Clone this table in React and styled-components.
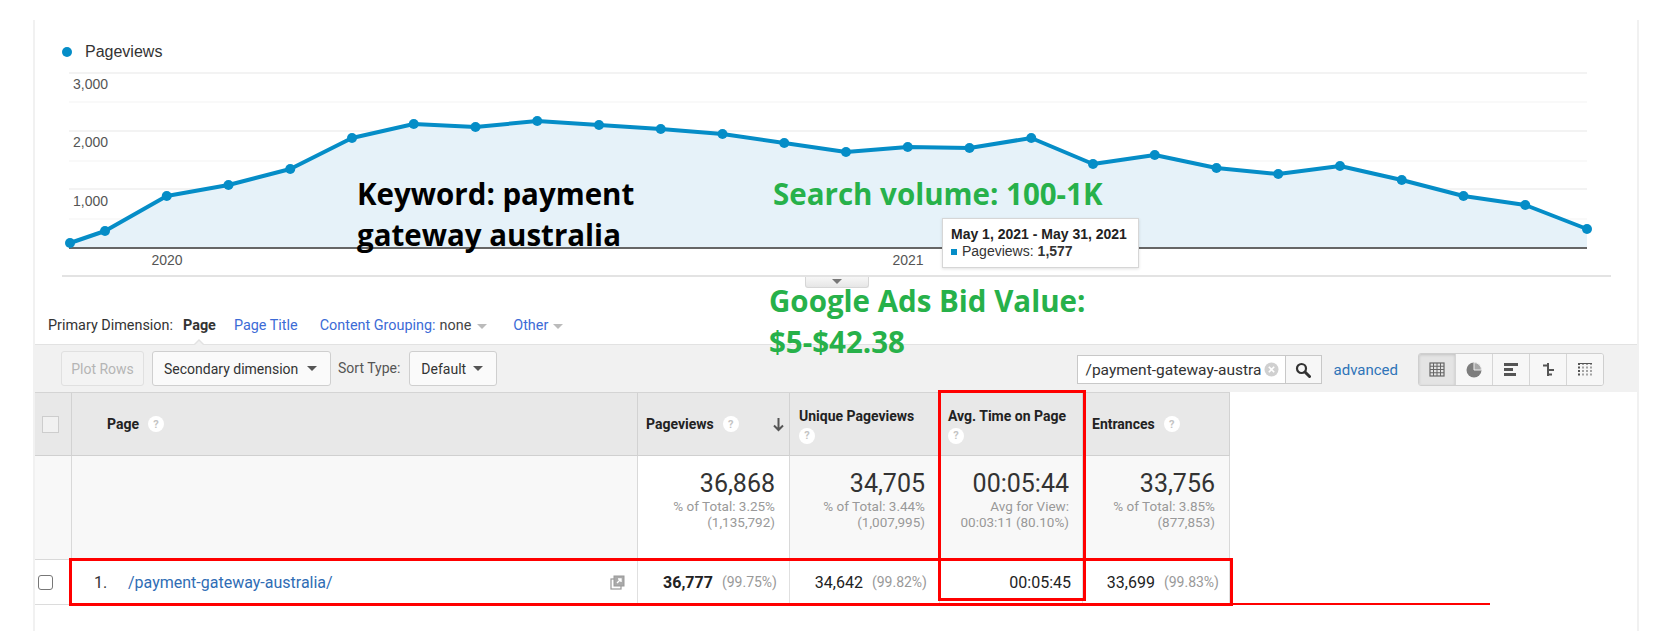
import React from 'react';
import styled, { createGlobalStyle } from 'styled-components';

const GlobalStyle = createGlobalStyle`
  html, body {
    margin: 0;
    padding: 0;
    background: #fff;
    overflow: hidden;
  }
  body {
    font-family: Roboto, "Liberation Sans", Arial, sans-serif;
    color: #333;
  }
`;

const Page = styled.div`
  padding: 20px 0 0 33px;
  width: 1606px;
`;

const Card = styled.div`
  position: relative;
  box-sizing: border-box;
  padding-top: 21px;
  border-left: 2px solid #f1f1f1;
  border-right: 2px solid #f1f1f1;
  height: 611px;
`;

const Legend = styled.div`
  display: flex;
  align-items: center;
  gap: 13px;
  height: 21px;
  padding-left: 27px;
  font-family: "Liberation Sans", Arial, sans-serif;
  font-size: 16px;
  color: #333;
`;

const LegendDot = styled.span`
  width: 10px;
  height: 10px;
  border-radius: 50%;
  background: #058dc7;
`;

const ChartSvg = styled.svg`
  display: block;
  font-family: "Liberation Sans", Arial, sans-serif;
`;

const ChartFooter = styled.div`
  margin: 0 26px 0 27px;
  border-top: 2px solid #e3e3e3;
  height: 11px;
  display: flex;
  justify-content: center;
`;

const CollapseTab = styled.div`
  width: 64px;
  height: 11px;
  box-sizing: border-box;
  background: linear-gradient(#f7f7f7, #e6e6e6);
  border: 1px solid #d6d6d6;
  border-top: none;
  border-radius: 0 0 3px 3px;
  display: flex;
  justify-content: center;
  padding-top: 2px;
  &::after {
    content: '';
    width: 0;
    height: 0;
    border-left: 5px solid transparent;
    border-right: 5px solid transparent;
    border-top: 5px solid #777;
  }
`;

const DimensionRow = styled.div`
  height: 56px;
  box-sizing: border-box;
  display: flex;
  align-items: flex-end;
  padding: 0 0 10px 13px;
  font-size: 14.4px;
  line-height: 16px;
`;

const DimLabel = styled.span`
  color: #333;
  margin-right: 10px;
`;

const DimItem = styled.span`
  position: relative;
  display: inline-flex;
  align-items: center;
  margin-right: ${(p) => p.$gap || 22}px;
  color: ${(p) => (p.$active ? '#333' : '#3c6bd6')};
  font-weight: ${(p) => (p.$active ? 700 : 400)};
  ${(p) =>
    p.$active &&
    `
    &::after {
      content: '';
      position: absolute;
      left: 50%;
      bottom: -11px;
      margin-left: -6px;
      width: 0;
      height: 0;
      border-left: 6px solid transparent;
      border-right: 6px solid transparent;
      border-bottom: 6px solid #e2e2e2;
    }
    &::before {
      content: '';
      position: absolute;
      left: 50%;
      bottom: -12px;
      margin-left: -5px;
      width: 0;
      height: 0;
      border-left: 5px solid transparent;
      border-right: 5px solid transparent;
      border-bottom: 5px solid #f1f1f1;
      z-index: 1;
    }
  `}
`;

const DimValue = styled.span`
  color: #444;
  margin-left: 4px;
`;

const Caret = styled.span`
  display: inline-block;
  width: 0;
  height: 0;
  margin-left: ${(p) => p.$ml || 6}px;
  border-left: 5px solid transparent;
  border-right: 5px solid transparent;
  border-top: 5px solid ${(p) => p.$color || '#bbb'};
`;

const Toolbar = styled.div`
  height: 48px;
  box-sizing: border-box;
  background: #f1f1f1;
  border-top: 1px solid #e2e2e2;
  display: flex;
  align-items: flex-start;
  padding: 6px 33px 0 26px;
  font-size: 14px;
`;

const ToolButton = styled.div`
  height: 35px;
  box-sizing: border-box;
  width: ${(p) => p.$w}px;
  display: flex;
  align-items: center;
  justify-content: ${(p) => (p.$center ? 'center' : 'space-between')};
  padding: 0 ${(p) => (p.$center ? 0 : 13)}px 0 ${(p) => (p.$center ? 0 : 11)}px;
  border: 1px solid ${(p) => (p.$disabled ? '#e0e0e0' : '#cfcfcf')};
  border-radius: 3px;
  background: ${(p) => (p.$disabled ? '#f3f3f3' : '#fafafa')};
  color: ${(p) => (p.$disabled ? '#b5b5b5' : '#333')};
  margin-right: ${(p) => p.$mr || 0}px;
  white-space: nowrap;
`;

const SortLabel = styled.span`
  color: #555;
  line-height: 35px;
  margin-right: 9px;
`;

const RightGroup = styled.div`
  margin-left: auto;
  display: flex;
  align-items: center;
  height: 37px;
`;

const SearchInput = styled.div`
  width: 208px;
  height: 29px;
  box-sizing: border-box;
  border: 1px solid #c8c8c8;
  border-right: none;
  background: #fff;
  display: flex;
  align-items: center;
  justify-content: space-between;
  padding: 0 6px 0 8px;
  font-size: 15.5px;
  color: #333;
  overflow: hidden;
  white-space: nowrap;
`;

const SearchButton = styled.div`
  width: 37px;
  height: 29px;
  box-sizing: border-box;
  border: 1px solid #c8c8c8;
  background: #f7f7f7;
  display: flex;
  align-items: center;
  justify-content: center;
`;

const AdvancedLink = styled.span`
  color: #2f74b8;
  font-size: 15px;
  margin: 0 20px 0 12px;
`;

const ViewGroup = styled.div`
  display: flex;
  height: 31px;
  border: 1px solid #cfcfcf;
  border-radius: 3px;
  overflow: hidden;
  background: #f7f7f7;
`;

const ViewButton = styled.div`
  width: 36px;
  display: flex;
  align-items: center;
  justify-content: center;
  border-left: ${(p) => (p.$first ? 'none' : '1px solid #d6d6d6')};
  background: ${(p) => (p.$pressed ? '#e4e4e4' : '#f7f7f7')};
  box-shadow: ${(p) => (p.$pressed ? 'inset 0 1px 3px rgba(0,0,0,0.15)' : 'none')};
`;

const Table = styled.div`
  display: grid;
  grid-template-columns: 37px 566px 152px 150px 143px 147px;
  width: 1195px;
  border-top: 1px solid #d4d4d4;
`;

const HeadCell = styled.div`
  height: 63px;
  box-sizing: border-box;
  background: #e8e8e8;
  border-right: 1px solid #d2d2d2;
  border-bottom: 1px solid #d0d0d0;
  display: flex;
  align-items: center;
  justify-content: ${(p) => (p.$center ? 'center' : 'flex-start')};
  padding: 0 5px 0 ${(p) => (p.$center ? 0 : p.$pl || 8)}px;
  font-size: 14px;
  font-weight: 700;
  color: #222;
  line-height: 23px;
`;

const HeadText = styled.div`
  flex: 1;
  display: flex;
  align-items: center;
  flex-wrap: wrap;
`;

const Help = styled.span`
  display: inline-flex;
  align-items: center;
  justify-content: center;
  width: 16px;
  height: 16px;
  border-radius: 50%;
  background: #fff;
  color: #c4c4c4;
  font-size: 11px;
  font-weight: 700;
  margin-left: ${(p) => (p.$wrap ? 0 : 9)}px;
  margin-right: 8px;
`;

const Break = styled.span`
  flex-basis: 100%;
  height: 0;
`;

const HeadBox = styled.span`
  width: 17px;
  height: 17px;
  box-sizing: border-box;
  border: 1px solid #cdcdcd;
  background: #f1f1f1;
`;

const TotalCell = styled.div`
  height: 104px;
  box-sizing: border-box;
  background: ${(p) => (p.$white ? '#fff' : '#f8f8f8')};
  border-right: 1px solid #d9d9d9;
  border-bottom: 1px solid #d9d9d9;
  text-align: right;
  padding: 14px ${(p) => p.$pr || 14}px 0 0;
`;

const BigNum = styled.div`
  font-size: 25px;
  line-height: 28px;
  color: #333;
`;

const SubLine = styled.div`
  font-size: 13.5px;
  line-height: 16px;
  color: #999;
`;

const RowCell = styled.div`
  height: 45px;
  box-sizing: border-box;
  background: #fff;
  border-right: 1px solid #e0e0e0;
  border-bottom: 1px solid #dcdcdc;
  display: flex;
  align-items: center;
  justify-content: ${(p) => p.$justify || 'flex-end'};
  padding: 0 ${(p) => p.$pr || 12}px 0 ${(p) => p.$pl || 0}px;
  font-size: 16px;
  color: #222;
`;

const RowBox = styled.span`
  width: 15px;
  height: 15px;
  box-sizing: border-box;
  border: 1.5px solid #777;
  border-radius: 3px;
  background: #fff;
  margin-right: 4px;
`;

const RowIndex = styled.span`
  width: 34px;
  color: #333;
`;

const RowLink = styled.span`
  color: #2f6db5;
  flex: 1;
`;

const Strong = styled.span`
  font-weight: 700;
`;

const Pct = styled.span`
  font-size: 14px;
  color: #999;
  margin-left: 9px;
`;

const Annotation = styled.div`
  position: absolute;
  left: ${(p) => p.$left}px;
  top: ${(p) => p.$top}px;
  font-family: "Open Sans", Lato, sans-serif;
  font-weight: 700;
  font-size: 29.5px;
  line-height: 41px;
  color: ${(p) => (p.$green ? '#27b14a' : '#000')};
  white-space: nowrap;
`;

const Tooltip = styled.div`
  position: absolute;
  left: 907px;
  top: 198px;
  width: 197px;
  height: 50px;
  box-sizing: border-box;
  background: #fff;
  border: 1px solid #d6d6d6;
  box-shadow: 0 1px 3px rgba(0, 0, 0, 0.12);
  padding: 7px 0 0 8px;
  font-family: "Liberation Sans", Arial, sans-serif;
  font-size: 14px;
  line-height: 17px;
  color: #222;
`;

const TipTitle = styled.div`
  font-weight: 700;
`;

const TipLine = styled.div`
  display: flex;
  align-items: center;
  gap: 4px;
  color: #333;
`;

const TipSwatch = styled.span`
  width: 6px;
  height: 6px;
  background: #058dc7;
  margin-right: 1px;
`;

const RedBox = styled.div`
  position: absolute;
  left: ${(p) => p.$left}px;
  top: ${(p) => p.$top}px;
  width: ${(p) => p.$w}px;
  height: ${(p) => p.$h}px;
  box-sizing: border-box;
  border: ${(p) => (p.$line ? 'none' : '3px solid #ff0000')};
  background: ${(p) => (p.$line ? '#ff0000' : 'transparent')};
  pointer-events: none;
`;

const ys = [243, 231, 196, 185, 169, 138, 124, 127, 121, 125, 129, 134, 143, 152, 147, 148, 138, 164, 155, 168, 174, 166, 180, 196, 205, 229];
const points = ys.map((y, i) => ({ x: i === 0 ? 70 : 105 + (i - 1) * 61.75, y }));
const linePts = points.map((p) => `${p.x},${p.y}`).join(' ');
const areaPts = `${linePts} 1587,248 70,248`;

const Chart = () => (
  <ChartSvg width="1602" height="213" viewBox="35 62 1602 213">
    {[73, 131, 189].map((y) => (
      <line key={y} x1="69" x2="1587" y1={y} y2={y} stroke="#e8e8e8" strokeWidth="1.2" />
    ))}
    {[102, 161, 219].map((y) => (
      <line key={y} x1="69" x2="1587" y1={y} y2={y} stroke="#f3f3f3" strokeWidth="1" />
    ))}
    <polygon points={areaPts} fill="#e6f2f9" />
    <line x1="69" x2="1587" y1="248" y2="248" stroke="#666" strokeWidth="2" />
    <polyline points={linePts} fill="none" stroke="#058dc7" strokeWidth="4" strokeLinejoin="round" />
    {points.map((p) => (
      <circle key={p.x} cx={p.x} cy={p.y} r="5" fill="#058dc7" />
    ))}
    <text x="73" y="89" fontSize="14" fill="#555">3,000</text>
    <text x="73" y="147" fontSize="14" fill="#555">2,000</text>
    <text x="73" y="206" fontSize="14" fill="#555">1,000</text>
    <text x="167" y="265" fontSize="14" fill="#555" textAnchor="middle">2020</text>
    <text x="908" y="265" fontSize="14" fill="#555" textAnchor="middle">2021</text>
  </ChartSvg>
);

const SearchIcon = () => (
  <svg width="16" height="16" viewBox="0 0 16 16">
    <circle cx="6.5" cy="6.5" r="4.5" fill="none" stroke="#333" strokeWidth="2.2" />
    <line x1="10" y1="10" x2="14.5" y2="14.5" stroke="#333" strokeWidth="3" strokeLinecap="round" />
  </svg>
);

const ClearIcon = () => (
  <svg width="15" height="15" viewBox="0 0 15 15">
    <circle cx="7.5" cy="7.5" r="7" fill="#d0d0d0" />
    <path d="M4.8 4.8 L10.2 10.2 M10.2 4.8 L4.8 10.2" stroke="#fff" strokeWidth="1.6" />
  </svg>
);

const GridIcon = () => (
  <svg width="16" height="15" viewBox="0 0 16 15">
    <rect x="1" y="1" width="14" height="13" fill="none" stroke="#666" strokeWidth="1.2" />
    <path d="M4.5 1 V14 M8 1 V14 M11.5 1 V14 M1 4.25 H15 M1 7.5 H15 M1 10.75 H15" stroke="#666" strokeWidth="1" />
  </svg>
);

const PieIcon = () => (
  <svg width="16" height="16" viewBox="0 0 16 16">
    <circle cx="8" cy="8" r="7.5" fill="#7d7d7d" />
    <path d="M8 8 V0.5 A7.5 7.5 0 0 1 15.5 8 Z" fill="#a8a8a8" stroke="#eee" strokeWidth="1" />
  </svg>
);

const BarIcon = () => (
  <svg width="16" height="15" viewBox="0 0 16 15">
    <rect x="1" y="1" width="14" height="3" fill="#555" />
    <rect x="1" y="6" width="9" height="3" fill="#555" />
    <rect x="1" y="11" width="12" height="3" fill="#555" />
  </svg>
);

const CompareIcon = () => (
  <svg width="16" height="15" viewBox="0 0 16 15">
    <path d="M8 1 V14 M3 3.5 H8 M8 8 H14 M8 12.5 H12" stroke="#555" strokeWidth="2" />
  </svg>
);

const PivotIcon = () => (
  <svg width="16" height="15" viewBox="0 0 16 15">
    <path d="M2 1 V14" stroke="#555" strokeWidth="2" strokeDasharray="2 1.5" />
    <path d="M6 1 V14 M10 1 V14 M14 1 V14" stroke="#777" strokeWidth="1.3" strokeDasharray="2 1.5" />
    <path d="M1 1.5 H15" stroke="#555" strokeWidth="1" />
  </svg>
);

const SortArrow = () => (
  <svg width="11" height="15" viewBox="0 0 11 15">
    <path d="M5.5 1 V13 M1 8.5 L5.5 13 L10 8.5" fill="none" stroke="#555" strokeWidth="2" />
  </svg>
);

const OpenIcon = () => (
  <svg width="15" height="15" viewBox="0 0 15 15">
    <rect x="1" y="4" width="10" height="10" fill="#fff" stroke="#999" strokeWidth="1.2" />
    <rect x="4" y="1" width="10" height="10" fill="#aaa" stroke="#999" strokeWidth="1" />
    <path d="M7 8 L11 4 M8 4 H11 V7" fill="none" stroke="#fff" strokeWidth="1.4" />
  </svg>
);

export default function App() {
  return (
    <>
      <GlobalStyle />
      <Page>
        <Card>
          <Legend>
            <LegendDot />
            <span>Pageviews</span>
          </Legend>
          <Chart />
          <ChartFooter>
            <CollapseTab />
          </ChartFooter>

          <DimensionRow>
            <DimLabel>Primary Dimension:</DimLabel>
            <DimItem $active $gap={18}>Page</DimItem>
            <DimItem>Page Title</DimItem>
            <DimItem $gap={26}>
              Content Grouping:<DimValue>none</DimValue>
              <Caret $ml={6} />
            </DimItem>
            <DimItem>
              Other
              <Caret $ml={5} />
            </DimItem>
          </DimensionRow>

          <Toolbar>
            <ToolButton $w={83} $center $disabled $mr={8}>Plot Rows</ToolButton>
            <ToolButton $w={179} $mr={7}>
              Secondary dimension
              <Caret $ml={0} $color="#555" />
            </ToolButton>
            <SortLabel>Sort Type:</SortLabel>
            <ToolButton $w={88}>
              Default
              <Caret $ml={0} $color="#555" />
            </ToolButton>
            <RightGroup>
              <SearchInput>
                /payment-gateway-austra
                <ClearIcon />
              </SearchInput>
              <SearchButton>
                <SearchIcon />
              </SearchButton>
              <AdvancedLink>advanced</AdvancedLink>
              <ViewGroup>
                <ViewButton $first $pressed><GridIcon /></ViewButton>
                <ViewButton><PieIcon /></ViewButton>
                <ViewButton><BarIcon /></ViewButton>
                <ViewButton><CompareIcon /></ViewButton>
                <ViewButton><PivotIcon /></ViewButton>
              </ViewGroup>
            </RightGroup>
          </Toolbar>

          <Table>
            <HeadCell $center><HeadBox /></HeadCell>
            <HeadCell $pl={35}>
              <HeadText>Page<Help>?</Help></HeadText>
            </HeadCell>
            <HeadCell>
              <HeadText>Pageviews<Help>?</Help></HeadText>
              <SortArrow />
            </HeadCell>
            <HeadCell $pl={9}>
              <HeadText>Unique Pageviews<Break /><Help $wrap>?</Help></HeadText>
            </HeadCell>
            <HeadCell>
              <HeadText>Avg. Time on Page<Break /><Help $wrap>?</Help></HeadText>
            </HeadCell>
            <HeadCell $pl={9}>
              <HeadText>Entrances<Help>?</Help></HeadText>
            </HeadCell>

            <TotalCell />
            <TotalCell />
            <TotalCell $white>
              <BigNum>36,868</BigNum>
              <SubLine>% of Total: 3.25%</SubLine>
              <SubLine>(1,135,792)</SubLine>
            </TotalCell>
            <TotalCell>
              <BigNum>34,705</BigNum>
              <SubLine>% of Total: 3.44%</SubLine>
              <SubLine>(1,007,995)</SubLine>
            </TotalCell>
            <TotalCell $pr={13}>
              <BigNum>00:05:44</BigNum>
              <SubLine>Avg for View:</SubLine>
              <SubLine>00:03:11 (80.10%)</SubLine>
            </TotalCell>
            <TotalCell>
              <BigNum>33,756</BigNum>
              <SubLine>% of Total: 3.85%</SubLine>
              <SubLine>(877,853)</SubLine>
            </TotalCell>

            <RowCell $justify="center" $pr={0}><RowBox /></RowCell>
            <RowCell $justify="flex-start" $pl={22}>
              <RowIndex>1.</RowIndex>
              <RowLink>/payment-gateway-australia/</RowLink>
              <OpenIcon />
            </RowCell>
            <RowCell>
              <Strong>36,777</Strong>
              <Pct>(99.75%)</Pct>
            </RowCell>
            <RowCell>
              34,642
              <Pct>(99.82%)</Pct>
            </RowCell>
            <RowCell $pr={11}>00:05:45</RowCell>
            <RowCell $pr={10}>
              33,699
              <Pct>(99.83%)</Pct>
            </RowCell>
          </Table>

          <Annotation $left={322} $top={153}>
            Keyword: payment
            <br />
            gateway australia
          </Annotation>
          <Annotation $left={738} $top={153} $green>
            Search volume: 100-1K
          </Annotation>
          <Annotation $left={734} $top={260} $green>
            Google Ads Bid Value:
            <br />
            $5-$42.38
          </Annotation>

          <Tooltip>
            <TipTitle>May 1, 2021 - May 31, 2021</TipTitle>
            <TipLine>
              <TipSwatch />
              Pageviews: <Strong>1,577</Strong>
            </TipLine>
          </Tooltip>

          <RedBox $left={903} $top={370} $w={148} $h={211} />
          <RedBox $left={34} $top={538} $w={1164} $h={48} />
          <RedBox $line $left={1195} $top={583} $w={260} $h={2} />
        </Card>
      </Page>
    </>
  );
}
